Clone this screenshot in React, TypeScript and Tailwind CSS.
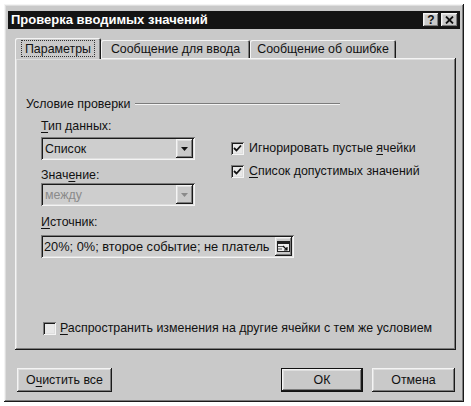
import React from 'react';

const raised =
  'shadow-[inset_-1px_-1px_0_#1a1a1a,inset_1px_1px_0_#f4f4f4,inset_-2px_-2px_0_#7c7c7c,inset_2px_2px_0_#dedede]';
const sunken =
  'shadow-[inset_1px_1px_0_#7c7c7c,inset_-1px_-1px_0_#f4f4f4,inset_2px_2px_0_#1a1a1a,inset_-2px_-2px_0_#dedede]';

const U: React.FC<{ children: React.ReactNode }> = ({ children }) => (
  <span className="underline decoration-1 underline-offset-[2px]">{children}</span>
);

const Check: React.FC<{ checked?: boolean }> = ({ checked }) => (
  <div className={`w-[13px] h-[13px] shrink-0 bg-[#e8e8e8] ${sunken} flex items-center justify-center`}>
    {checked && (
      <svg width="9" height="9" viewBox="0 0 9 9">
        <path d="M1 4 L3.5 6.5 L8 1.5" stroke="#111" strokeWidth="1.8" fill="none" />
      </svg>
    )}
  </div>
);

const Arrow: React.FC<{ disabled?: boolean }> = ({ disabled }) => (
  <div className={`w-[17px] h-[19px] bg-[#c9c9c9] ${raised} flex items-center justify-center`}>
    <svg width="7" height="4" viewBox="0 0 7 4">
      <path d="M0 0 H7 L3.5 4 Z" fill={disabled ? '#8a8a8a' : '#111'} />
    </svg>
  </div>
);

const Select: React.FC<{ value: string; disabled?: boolean }> = ({ value, disabled }) => (
  <div className={`w-[154px] h-[23px] bg-[#cecece] ${sunken} flex items-center pl-[4px] pr-[2px]`}>
    <span className={`flex-1 ${disabled ? 'text-[#8a8a8a]' : 'text-[#111]'}`}>{value}</span>
    <Arrow disabled={disabled} />
  </div>
);

const Button: React.FC<{ children: React.ReactNode; width: string; primary?: boolean }> = ({ children, width, primary }) => (
  <div className={`${width} h-[24px] ${primary ? 'border border-[#111]' : ''}`}>
    <div className={`w-full h-full bg-[#c9c9c9] ${raised} flex items-center justify-center text-[#111]`}>{children}</div>
  </div>
);

export default function App() {
  return (
    <div
      className="w-[471px] h-[406px] bg-white pl-[4px] pt-[4px] text-[12.4px] leading-[16px] text-[#111]"
      style={{ fontFamily: '"Liberation Sans", Arial, sans-serif' }}
    >
      <div className={`w-[460px] h-[398px] bg-[#c9c9c9] ${raised} px-[4px] pt-[7px] flex flex-col`}>
        {/* title bar */}
        <div className="h-[18px] bg-[#141414] flex items-center pl-[3px] pr-[2px]">
          <span className="flex-1 text-white font-bold text-[13px]">Проверка вводимых значений</span>
          <div className={`w-[16px] h-[14px] bg-[#c9c9c9] ${raised} flex items-center justify-center font-bold text-[12px] leading-[12px]`}>?</div>
          <div className={`w-[17px] h-[14px] ml-[2px] bg-[#c9c9c9] ${raised} flex items-center justify-center`}>
            <svg width="9" height="8" viewBox="0 0 9 8">
              <path d="M1 0.5 L8 7.5 M8 0.5 L1 7.5" stroke="#111" strokeWidth="1.8" />
            </svg>
          </div>
        </div>

        <div className="ml-[7px] mt-[8px] w-[441px] flex flex-col">
          {/* tabs */}
          <div className="flex items-end h-[21px]">
            <div className="w-[86px] h-[21px] -mb-[1px] relative z-10 bg-[#c9c9c9] rounded-t-[2px] shadow-[inset_1px_1px_0_#f4f4f4,inset_-1px_0_0_#1a1a1a,inset_-2px_0_0_#7c7c7c] flex items-center justify-center">
              <span className="border border-dotted border-[#333] px-[3px] h-[17px] flex items-center">Параметры</span>
            </div>
            <div className="w-[149px] h-[18px] bg-[#c9c9c9] rounded-t-[2px] shadow-[inset_1px_1px_0_#f4f4f4,inset_-1px_0_0_#1a1a1a,inset_-2px_0_0_#7c7c7c] flex items-center justify-center">
              Сообщение для ввода
            </div>
            <div className="w-[146px] h-[18px] bg-[#c9c9c9] rounded-t-[2px] shadow-[inset_1px_1px_0_#f4f4f4,inset_-1px_0_0_#1a1a1a,inset_-2px_0_0_#7c7c7c] flex items-center justify-center">
              Сообщение об ошибке
            </div>
          </div>

          {/* panel */}
          <div className={`h-[292px] bg-[#c9c9c9] ${raised} flex flex-col`}>
            <div className="mt-[38px] pl-[11px] flex items-center">
              <span>Условие проверки</span>
              <div className="ml-[5px] w-[205px] h-[2px] border-t border-[#7c7c7c] border-b border-b-[#f4f4f4]" />
            </div>

            <div className="mt-[6px] pl-[26px] flex">
              <div className="w-[190px] flex flex-col">
                <span>
                  <U>Т</U>ип данных:
                </span>
                <div className="mt-[3px]">
                  <Select value="Список" />
                </div>
                <span className="mt-[7px]">
                  Знач<U>е</U>ние:
                </span>
                <Select value="между" disabled />
              </div>
              <div className="flex flex-col gap-[7px] mt-[22px]">
                <div className="flex items-center gap-[5px]">
                  <Check checked />
                  <span>
                    Игнорировать пустые <U>я</U>чейки
                  </span>
                </div>
                <div className="flex items-center gap-[5px]">
                  <Check checked />
                  <span>
                    <U>С</U>писок допустимых значений
                  </span>
                </div>
              </div>
            </div>

            <div className="pl-[26px] mt-[8px] flex flex-col">
              <span>
                <U>И</U>сточник:
              </span>
              <div className={`mt-[5px] w-[253px] h-[23px] bg-[#cecece] ${sunken} flex items-center pl-[3px] pr-[2px]`}>
                <span className="flex-1 min-w-0 whitespace-nowrap text-[12.8px]">20%; 0%; второе событие; не платель</span>
                <div className={`w-[17px] h-[19px] shrink-0 bg-[#c9c9c9] ${raised} flex items-center justify-center`}>
                  <svg width="13" height="11" viewBox="0 0 13 11">
                    <rect x="0.5" y="0.5" width="12" height="10" fill="#eee" stroke="#222" />
                    <rect x="1" y="1" width="11" height="2" fill="#222" />
                    <path d="M1 5.5 H7 M1 8 H5" stroke="#555" />
                    <path d="M6 5 L10 9 M10 6 V9 H7" stroke="#111" strokeWidth="1.2" fill="none" />
                  </svg>
                </div>
              </div>
            </div>

            <div className="mt-auto mb-[14px] pl-[28px] flex items-center gap-[4px]">
              <Check />
              <span>
                <U>Р</U>аспространить изменения на другие ячейки с тем же условием
              </span>
            </div>
          </div>

          {/* buttons */}
          <div className="mt-[18px] flex items-center justify-between">
            <div className="ml-[2px]">
              <Button width="w-[95px]">
                О<U>ч</U>истить все
              </Button>
            </div>
            <div className="flex gap-[9px] mr-[1px]">
              <Button width="w-[82px]" primary>
                ОК
              </Button>
              <Button width="w-[83px]">Отмена</Button>
            </div>
          </div>
        </div>
      </div>
    </div>
  );
}
